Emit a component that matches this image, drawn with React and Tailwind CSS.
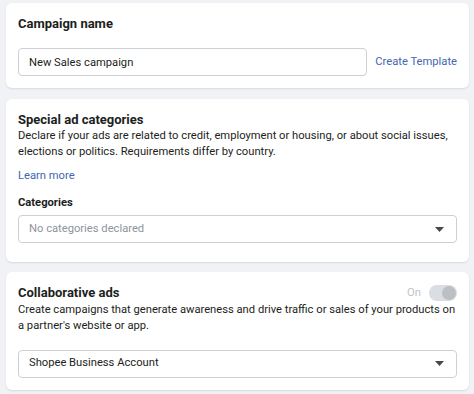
import { useState } from 'react'

function Caret() {
  return (
    <svg width="9" height="5" viewBox="0 0 9 5" className="shrink-0">
      <path d="M0 0h9L4.5 5z" fill="#444950" />
    </svg>
  )
}

function SelectBox({ value, muted }) {
  return (
    <div className="flex h-[28px] items-center justify-between rounded-[4px] border border-[#ccd0d5] bg-white pl-[10px] pr-[12px]">
      <span className={muted ? 'text-[11.2px] text-[#8d949e]' : 'text-[11.2px] text-[#1c1e21]'}>{value}</span>
      <Caret />
    </div>
  )
}

function Card({ children, className }) {
  return (
    <section className={'rounded-[6px] bg-white px-[12px] shadow-[0_1px_2px_rgba(0,0,0,0.1)] ' + className}>
      {children}
    </section>
  )
}

export default function App() {
  const [name, setName] = useState('New Sales campaign')
  const [collab, setCollab] = useState(true)

  return (
    <div
      className="min-h-[394px] w-[474px] bg-[#f0f2f5] pl-[6px] pr-[5px] pt-[3px] text-[#1c1e21]"
      style={{ fontFamily: 'Roboto, "Liberation Sans", sans-serif' }}
    >
      <Card className="pb-[12px] pt-[13px]">
        <h2 className="text-[13px] font-bold leading-[16px] text-[#1c1e21]">Campaign name</h2>
        <div className="mt-[16px] flex items-center gap-[8px]">
          <input
            className="h-[28px] min-w-0 flex-1 rounded-[4px] border border-[#ccd0d5] px-[10px] text-[11.2px] text-[#1c1e21] outline-none"
            value={name}
            onChange={(e) => setName(e.target.value)}
          />
          <a className="shrink-0 whitespace-nowrap text-[11.2px] text-[#4267b2]">Create Template</a>
        </div>
      </Card>

      <Card className="mt-[11px] pb-[19px] pt-[13px]">
        <h2 className="text-[13px] font-bold leading-[16px]">Special ad categories</h2>
        <p className="text-[11.2px] leading-[16px] text-[#1c1e21]">
          Declare if your ads are related to credit, employment or housing, or about social issues,
          elections or politics. Requirements differ by country.
        </p>
        <a className="mt-[8px] block text-[11.2px] leading-[16px] text-[#4267b2]">Learn more</a>
        <h3 className="mt-[11px] text-[11.2px] font-bold leading-[16px]">Categories</h3>
        <div className="mt-[4px]">
          <SelectBox value="No categories declared" muted />
        </div>
      </Card>

      <Card className="mt-[10px] pb-[12px] pt-[13px]">
        <div className="flex items-center justify-between">
          <h2 className="text-[13px] font-bold leading-[16px]">Collaborative ads</h2>
          <button className="flex items-center gap-[8px]" onClick={() => setCollab(!collab)}>
            <span className="text-[11.2px] text-[#bec3c9]">On</span>
            <span className="flex h-[16px] w-[28px] items-center justify-end rounded-full bg-[#dadde1] p-[1px]">
              <span className="h-[14px] w-[14px] rounded-full bg-[#bcc0c4]" />
            </span>
          </button>
        </div>
        <p className="text-[11.2px] leading-[16px]">
          Create campaigns that generate awareness and drive traffic or sales of your products on a
          partner's website or app.
        </p>
        <div className="mt-[16px]">
          <SelectBox value="Shopee Business Account" />
        </div>
      </Card>
    </div>
  )
}
